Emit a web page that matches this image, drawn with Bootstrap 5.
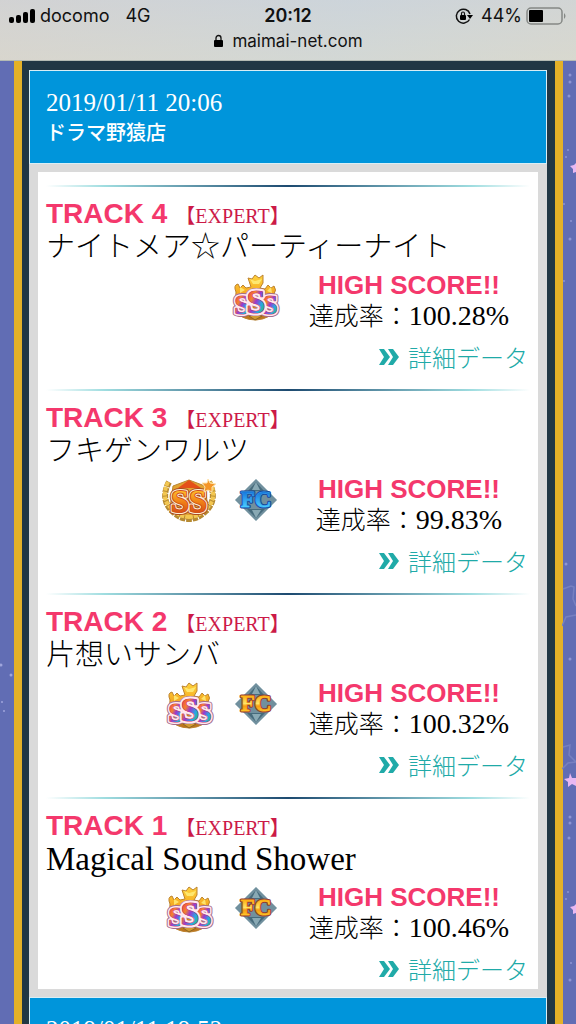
<!DOCTYPE html>
<html lang="ja">
<head>
<meta charset="utf-8">
<meta name="viewport" content="width=device-width, initial-scale=1">
<title>maimai-net.com</title>
<link href="https://cdn.jsdelivr.net/npm/bootstrap@5.3.0/dist/css/bootstrap.min.css" rel="stylesheet">
<style>
  body { font-family: "Liberation Serif", "Noto Sans CJK JP", serif; color: #000; background: #616db4; }
  .topbar { font-family: Inter, "Noto Sans CJK JP", sans-serif; font-size: 18px; line-height: 24px; color: #111; background: linear-gradient(100deg, rgba(214,210,208,.6), rgba(205,213,220,.6) 60%, rgba(214,214,210,.6)), linear-gradient(#ccd3d8, #dcdcca); border-bottom: 1px solid #b4bbb4; padding: 4px 8px 6px; }
  .topbar .side { flex: 1 1 0; }
  .topbar .address { font-size: 17px; line-height: 26px; }
  .stage { padding: 0 13px 0 14px; background: #616db4; min-height: 0; }
  .sky { position: absolute; top: 0; width: 14px; height: 963px; }
  .frame { background: #213744; border: solid #e4b128; border-width: 0 8px; padding: 9px 8px 0 7px; }
  .play-head { background: #0095db; border: 1px solid #d9eef5; color: #fff; padding: 16px; font-size: 25px; line-height: 31px; height: 94px; }
  .play-head .shop { font-size: 20px; line-height: 30px; font-weight: 500; }
  .play-body { border: solid #dadada; border-width: 8px 9px; background: #fff; padding: 13px 8px 0; }
  .track { height: 204px; padding-top: 12px; }
  .track:last-child { height: 192px; }
  .track::before { content: ""; display: block; height: 2px; margin-top: -12px; margin-bottom: 12px; background: linear-gradient(90deg, #fff, #9fdde0 12%, #1d4a70 50%, #9fdde0 88%, #fff); }
  .pink { font-family: "Liberation Sans", sans-serif; font-weight: 700; font-size: 28px; line-height: 30px; color: #f4386c; }
  .score { font-size: 26px; }
  .level { font-size: 20px; line-height: 30px; color: #cc1a48; }
  .song { font-size: 29px; line-height: 32px; font-weight: 300; margin-bottom: 7px; }
  .song.latin { font-size: 33px; }
  .medals { height: 54px; }
  .medals svg { width: 66px; height: 54px; flex: none; }
  .medals text, symbol text { font-family: "Liberation Serif", serif; font-weight: 700; text-anchor: middle; paint-order: stroke; stroke-linejoin: round; }
  .rate { font-size: 25px; line-height: 31px; font-weight: 300; }
  .rate b { font-weight: 400; font-size: 28px; }
  .detail { font-family: "Noto Sans CJK JP", sans-serif; font-weight: 300; font-size: 24px; line-height: 30px; color: #20aaa8; margin: 10px 2px 0 0; }
</style>
</head>
<body>
<svg width="0" height="0" class="position-absolute" aria-hidden="true">
  <defs>
    <linearGradient id="gold" x2="0" y2="1"><stop stop-color="#ffd33c"/><stop offset=".5" stop-color="#f2a01c"/><stop offset="1" stop-color="#b9701c"/></linearGradient>
    <linearGradient id="rainbow" x2="1" y2="1"><stop offset=".15" stop-color="#ee3c50"/><stop offset=".35" stop-color="#f4842c"/><stop offset=".5" stop-color="#9a38d0"/><stop offset=".68" stop-color="#28a8e4"/><stop offset=".85" stop-color="#38bb70"/></linearGradient>
    <linearGradient id="orange" x2="0" y2="1"><stop offset=".2" stop-color="#ffc02c"/><stop offset=".55" stop-color="#ee7c16"/><stop offset=".85" stop-color="#d64c14"/></linearGradient>
    <linearGradient id="fcgold" x2="0" y2="1"><stop offset=".2" stop-color="#ffb010"/><stop offset=".5" stop-color="#ffe468"/><stop offset=".6" stop-color="#f89c10"/><stop offset=".85" stop-color="#ffcf30"/></linearGradient>
    <linearGradient id="fcblue" x2="0" y2="1"><stop offset=".2" stop-color="#1878dc"/><stop offset=".8" stop-color="#48ccff"/></linearGradient>
    <symbol id="sss" viewBox="0 0 66 54">
      <path d="M14 22q-3-7 2-8l2 4 3-3 3 3 5-1-3-9 4 1 3-4 4 3 4-3 0 8-3 5 5 1 3-4 3 3 3-2q3 4 0 8l2 14q-5 11-20 12-16 0-21-11z" fill="url(#gold)" stroke="#bd8330"/>
      <path d="M28 9l5 2 7-2-3 5h-6zM18 17l5 3-5 3zM49 17l-4 4 5 2z" fill="#fff080" opacity=".8"/>
      <path d="M27 46q6-3 13 0l-7 4z" fill="#d29a32" stroke="#8c6724"/>
      <g stroke-width="6" stroke="#a46d8e" font-size="28"><text x="20" y="44">S</text><text x="48" y="44">S</text><text x="34" y="43" font-size="34">S</text></g>
      <g stroke-width="4" stroke="#ffe9ee" fill="#ffe9ee" font-size="28"><text x="20" y="44">S</text><text x="48" y="44">S</text></g>
      <g stroke-width="1" stroke="#d13d75" fill="url(#rainbow)" font-size="28"><text x="20" y="44">S</text><text x="48" y="44">S</text></g>
      <text x="34" y="43" font-size="34" stroke-width="5" stroke="#ffe9ee">S</text>
      <text x="34" y="43" font-size="34" stroke-width="1" stroke="#d13d75" fill="url(#rainbow)">S</text>
    </symbol>
    <symbol id="ssp" viewBox="0 0 66 54">
      <path d="M17 12L33 6l16 6 3 22q-7 9-19 12-12-3-19-12z" fill="#e2a431" stroke="#b98634"/>
      <path d="M22 14l11-8 12 8z" fill="#e45018"/>
      <path d="M13 8q-9 17 3 29 8 8 17 8M53 8q9 17-3 29-8 8-17 8" fill="none" stroke="#b68a32" stroke-width="6" stroke-dasharray="5 1"/>
      <path d="M12 8q-8 17 4 27 8 8 17 8M54 8q8 17-4 27-8 8-17 8" fill="none" stroke="#f3c751" stroke-width="4" stroke-dasharray="4 1"/>
      <g font-size="32" stroke-width="6" stroke="#a94a20"><text x="24" y="38">S</text><text x="42" y="38">S</text></g>
      <g font-size="32" stroke-width="4" stroke="#fff0d4"><text x="24" y="38">S</text><text x="42" y="38">S</text></g>
      <g font-size="32" stroke-width="2" stroke="#d0521c" fill="url(#orange)"><text x="24" y="38">S</text><text x="42" y="38">S</text></g>
      <path d="M52 5l2 4 6 1-4 3v5l-4-2-4 2 1-5-3-4 5 0z" fill="#f49528" stroke="#ffe5b0"/>
    </symbol>
    <symbol id="fc-plate" viewBox="0 0 66 54">
      <path d="M34 5L55 26 34 47 13 26z" fill="#71909e" stroke="#b0c3ca" stroke-width="1"/>
      <path d="M34 8l8 9H26zM34 44l-9-9h18z" fill="#466b7c"/>
      <path d="M34 8l-4 8h8zM34 44l-4-8h9z" fill="#89a9b4"/>
    </symbol>
  </defs>
</svg>

<div class="vh-100 overflow-hidden d-flex flex-column">
  <header class="topbar flex-shrink-0">
    <div class="d-flex align-items-center">
      <div class="side d-flex align-items-center">
        <svg width="28" height="18" viewBox="0 0 28 18" aria-hidden="true"><rect x="1" y="10" width="5" height="6" rx="2"/><rect x="8" y="8" width="5" height="8" rx="2"/><rect x="15" y="5" width="5" height="11" rx="2"/><rect x="22" y="2" width="5" height="14" rx="2"/></svg>
        <span class="ms-1">docomo</span><span class="ms-3">4G</span>
      </div>
      <strong class="fw-semibold">20:12</strong>
      <div class="side d-flex align-items-center justify-content-end">
        <svg width="18" height="18" viewBox="0 0 18 18" aria-hidden="true"><path d="M14.500 12.500A7 7 0 1 1 15 7" fill="none" stroke="#111" stroke-width="1.500"/><path d="M12 8h6l-3 4z"/><rect x="5" y="8" width="6" height="5" rx="1"/><path d="M6.500 8V6.500a1.500 1.500 0 0 1 3 0V8" fill="none" stroke="#111" stroke-width="1.200"/></svg>
        <span class="ms-2 pe-1">44%</span>
        <svg width="42" height="18" viewBox="0 0 42 18" aria-hidden="true"><rect x="1" y="1" width="35" height="16" rx="4" fill="none" stroke="#858885" stroke-width="1.500"/><rect x="3" y="3" width="14" height="12" rx="1"/><path d="M38 6q3 3 0 6z" fill="#858885"/></svg>
      </div>
    </div>
    <div class="address d-flex align-items-center justify-content-center">
      <svg class="me-2" width="11" height="14" viewBox="0 0 11 14" aria-hidden="true"><rect x="1" y="6" width="9" height="7" rx="1"/><path d="M3 6V4a2.500 2.500 0 0 1 5 0v2" fill="none" stroke="#111" stroke-width="1.300"/></svg>
      <span>maimai-net.com</span>
    </div>
  </header>

  <main class="stage position-relative flex-grow-1">
    <svg class="sky start-0" viewBox="0 0 14 963" aria-hidden="true"><g fill="#9fa5dc"><circle cx="1" cy="604" r="1.500"/><circle cx="11" cy="614" r="1.500"/><circle cx="2" cy="641" r="1"/><circle cx="4" cy="650" r="1"/></g></svg>
    <svg class="sky end-0" viewBox="0 0 14 963" aria-hidden="true">
      <g fill="#8d95d3"><circle cx="8" cy="14" r="1.500"/><circle cx="8" cy="21" r="1.500"/><circle cx="7" cy="35" r="1.500"/><circle cx="6" cy="89" r="1"/><circle cx="4" cy="96" r="1"/><circle cx="2" cy="143" r="1"/><circle cx="9" cy="160" r="1"/><circle cx="8" cy="178" r="1.500"/><circle cx="2" cy="220" r="1"/><circle cx="4" cy="503" r="1.500"/><circle cx="8" cy="598" r="1.500"/><circle cx="8" cy="756" r="1.500"/><circle cx="8" cy="762" r="1.500"/><circle cx="7" cy="777" r="1.500"/><circle cx="6" cy="831" r="1"/><circle cx="4" cy="838" r="1"/><circle cx="9" cy="902" r="1"/><circle cx="8" cy="919" r="1.500"/></g>
      <path d="M1 528l8-3 3 1-1 12 3 7M0 565l4-9 10-2M1 686l7-2-1 10 7 7-8 1-6 6" fill="none" stroke="#7680c1" stroke-width="1.500"/>
      <g fill="#e8b8f2"><path d="M8 712l2 5 4 0v8l-4-2-4 3 0-5-4-3 5-1z"/><path d="M14 102l-2 2-4 1 3 3 0 4 3-1zM14 843l-2 2-4 1 3 3 0 4 3-1z"/></g>
    </svg>
    <div class="frame">
      <section>
        <header class="play-head"><div>2019/01/11 20:06</div><div class="shop">ドラマ野猿店</div></header>
        <div class="play-body">
          <article class="track">
            <div class="d-flex align-items-baseline"><span class="pink">TRACK 4</span><span class="level ms-2">【EXPERT】</span></div>
            <div class="song">ナイトメア☆パーティーナイト</div>
            <div class="row g-0">
              <div class="col-6 medals d-flex justify-content-end"><svg role="img" aria-label="SSS"><use href="#sss"/></svg></div>
              <div class="col-6 text-center"><div class="pink score">HIGH SCORE!!</div><div class="rate">達成率：<b>100.28%</b></div></div>
            </div>
            <div class="d-flex justify-content-end"><a href="#" class="detail text-decoration-none d-flex align-items-center"><svg class="me-2" width="22" height="18" viewBox="0 0 22 18" aria-hidden="true"><path d="M1 1h5l6 8-6 8H1l5-8zM10 1h5l6 8-6 8h-5l5-8z" fill="#20aaa8"/></svg>詳細データ</a></div>
          </article>
          <article class="track">
            <div class="d-flex align-items-baseline"><span class="pink">TRACK 3</span><span class="level ms-2">【EXPERT】</span></div>
            <div class="song">フキゲンワルツ</div>
            <div class="row g-0">
              <div class="col-6 medals d-flex justify-content-end"><svg role="img" aria-label="SS+"><use href="#ssp"/></svg><svg role="img" aria-label="FC" viewBox="0 0 66 54"><use href="#fc-plate"/><g font-size="23"><text x="34" y="33" stroke="#17489b" stroke-width="3">FC</text><text x="34" y="33" fill="url(#fcblue)" stroke="#3ca4ee" stroke-width="1">FC</text></g></svg></div>
              <div class="col-6 text-center"><div class="pink score">HIGH SCORE!!</div><div class="rate">達成率：<b>99.83%</b></div></div>
            </div>
            <div class="d-flex justify-content-end"><a href="#" class="detail text-decoration-none d-flex align-items-center"><svg class="me-2" width="22" height="18" viewBox="0 0 22 18" aria-hidden="true"><path d="M1 1h5l6 8-6 8H1l5-8zM10 1h5l6 8-6 8h-5l5-8z" fill="#20aaa8"/></svg>詳細データ</a></div>
          </article>
          <article class="track">
            <div class="d-flex align-items-baseline"><span class="pink">TRACK 2</span><span class="level ms-2">【EXPERT】</span></div>
            <div class="song">片想いサンバ</div>
            <div class="row g-0">
              <div class="col-6 medals d-flex justify-content-end"><svg role="img" aria-label="SSS"><use href="#sss"/></svg><svg role="img" aria-label="FC" viewBox="0 0 66 54"><use href="#fc-plate"/><g font-size="23"><text x="34" y="33" stroke="#8f3c34" stroke-width="3">FC</text><text x="34" y="33" fill="url(#fcgold)" stroke="#f5a41c" stroke-width="1">FC</text></g></svg></div>
              <div class="col-6 text-center"><div class="pink score">HIGH SCORE!!</div><div class="rate">達成率：<b>100.32%</b></div></div>
            </div>
            <div class="d-flex justify-content-end"><a href="#" class="detail text-decoration-none d-flex align-items-center"><svg class="me-2" width="22" height="18" viewBox="0 0 22 18" aria-hidden="true"><path d="M1 1h5l6 8-6 8H1l5-8zM10 1h5l6 8-6 8h-5l5-8z" fill="#20aaa8"/></svg>詳細データ</a></div>
          </article>
          <article class="track">
            <div class="d-flex align-items-baseline"><span class="pink">TRACK 1</span><span class="level ms-2">【EXPERT】</span></div>
            <div class="song latin">Magical Sound Shower</div>
            <div class="row g-0">
              <div class="col-6 medals d-flex justify-content-end"><svg role="img" aria-label="SSS"><use href="#sss"/></svg><svg role="img" aria-label="FC" viewBox="0 0 66 54"><use href="#fc-plate"/><g font-size="23"><text x="34" y="33" stroke="#8f3c34" stroke-width="3">FC</text><text x="34" y="33" fill="url(#fcgold)" stroke="#f5a41c" stroke-width="1">FC</text></g></svg></div>
              <div class="col-6 text-center"><div class="pink score">HIGH SCORE!!</div><div class="rate">達成率：<b>100.46%</b></div></div>
            </div>
            <div class="d-flex justify-content-end"><a href="#" class="detail text-decoration-none d-flex align-items-center"><svg class="me-2" width="22" height="18" viewBox="0 0 22 18" aria-hidden="true"><path d="M1 1h5l6 8-6 8H1l5-8zM10 1h5l6 8-6 8h-5l5-8z" fill="#20aaa8"/></svg>詳細データ</a></div>
          </article>
        </div>
      </section>
      <section><header class="play-head"><div>2019/01/11 19:52</div></header></section>
    </div>
  </main>
</div>
<script src="https://cdn.jsdelivr.net/npm/bootstrap@5.3.0/dist/js/bootstrap.bundle.min.js"></script>
</body>
</html>
